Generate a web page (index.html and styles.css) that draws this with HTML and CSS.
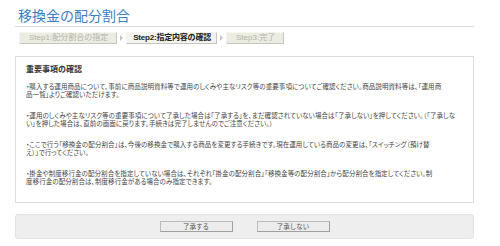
FILE: index.html
```html
<!DOCTYPE html>
<html lang="ja">
<head>
    <meta charset="UTF-8">
    <meta name="viewport" content="width=device-width, initial-scale=1.0">
    <title>移換金の配分割合</title>
    <link rel="stylesheet" href="styles.css">
</head>
<body>
    <div class="page">
        <h1 class="page-title">移換金の配分割合</h1>

        <ol class="steps">
            <li class="step">Step1:配分割合の指定</li>
            <li class="step-arrow"></li>
            <li class="step current">Step2:指定内容の確認</li>
            <li class="step-arrow"></li>
            <li class="step">Step3:完了</li>
        </ol>

        <!-- notice box -->
        <div class="notice">
            <h2>重要事項の確認</h2>
            <p>・購入する運用商品について、事前に商品説明資料等で運用のしくみや主なリスク等の重要事項についてご確認ください。商品説明資料等は、「運用商<br>品一覧」よりご確認いただけます。</p>
            <p>・運用のしくみや主なリスク等の重要事項について了承した場合は「了承する」を、まだ確認されていない場合は「了承しない」を押してください。（「了承しな<br>い」を押した場合は、直前の画面に戻ります。手続きは完了しませんのでご注意ください。）</p>
            <p>・ここで行う「移換金の配分割合」は、今後の移換金で購入する商品を変更する手続きです。現在運用している商品の変更は、「スイッチング（預け替<br>え）」で行ってください。</p>
            <p>・掛金や制度移行金の配分割合を指定していない場合は、それぞれ「掛金の配分割合」「移換金等の配分割合」から配分割合を指定してください。制<br>度移行金の配分割合は、制度移行金がある場合のみ指定できます。</p>
        </div>

        <div class="actions">
            <button type="button">了承する</button>
            <button type="button">了承しない</button>
        </div>
    </div>
</body>
</html>
```

FILE: styles.css
```css
body {
    margin: 0;
    padding: 0;
    background: #fff;
    font-family: "Liberation Sans", "Noto Sans CJK JP", sans-serif;
    color: #444;
}
.page {
    width: 459px;
    margin-left: 15px;
}
.page-title {
    margin: 0;
    padding: 8px 0 2px 3px;
    font-size: 14px;
    line-height: 16px;
    font-weight: normal;
    color: #3a7fc2;
    border-bottom: 1px solid #ddd;
}
.steps {
    list-style: none;
    display: flex;
    align-items: center;
    margin: 5px 0 0 4px;
    padding: 0;
}
.step {
    height: 10px;
    padding: 0 8px 0 9px;
    font-size: 8px;
    line-height: 10px;
    color: #b4b4a8;
    background: #ecece2;
    border: 1px solid #f6f6f0;
    border-right-color: #c6c6bc;
    border-bottom-color: #c6c6bc;
    white-space: nowrap;
}
.step.current {
    padding: 0 5px 0 6px;
    color: #222;
    font-weight: bold;
    letter-spacing: -0.2px;
    background: #f3f3ef;
}
.step-arrow {
    width: 0;
    height: 0;
    margin: 0 3px;
    border-left: 3px solid #c4c4c4;
    border-top: 3px solid transparent;
    border-bottom: 3px solid transparent;
}
.notice {
    margin-top: 12px;
    padding: 8px 10px 7px;
    border: 1px solid #ddd;
    font-feature-settings: "palt";
}
.notice h2 {
    margin: 0 0 8px;
    font-size: 8px;
    line-height: 10px;
    color: #333;
}
.notice p {
    margin: 0 0 13px;
    font-size: 6.5px;
    line-height: 8px;
    letter-spacing: 0.08px;
    white-space: nowrap;
}
.notice p:last-child {
    margin-bottom: 9px;
}
.actions {
    display: flex;
    justify-content: center;
    gap: 24px;
    margin-top: 11px;
    padding: 6px 0;
    background: #eee;
    border: 1px solid #e2e2e2;
    border-radius: 3px;
}
.actions button {
    width: 73px;
    height: 11px;
    padding: 0;
    font-family: inherit;
    font-size: 6.5px;
    line-height: 9px;
    color: #555;
    background: #ececec;
    border: 1px solid #a0a0a0;
    border-top-color: #bbb;
    border-left-color: #bbb;
    border-radius: 0;
}
```
